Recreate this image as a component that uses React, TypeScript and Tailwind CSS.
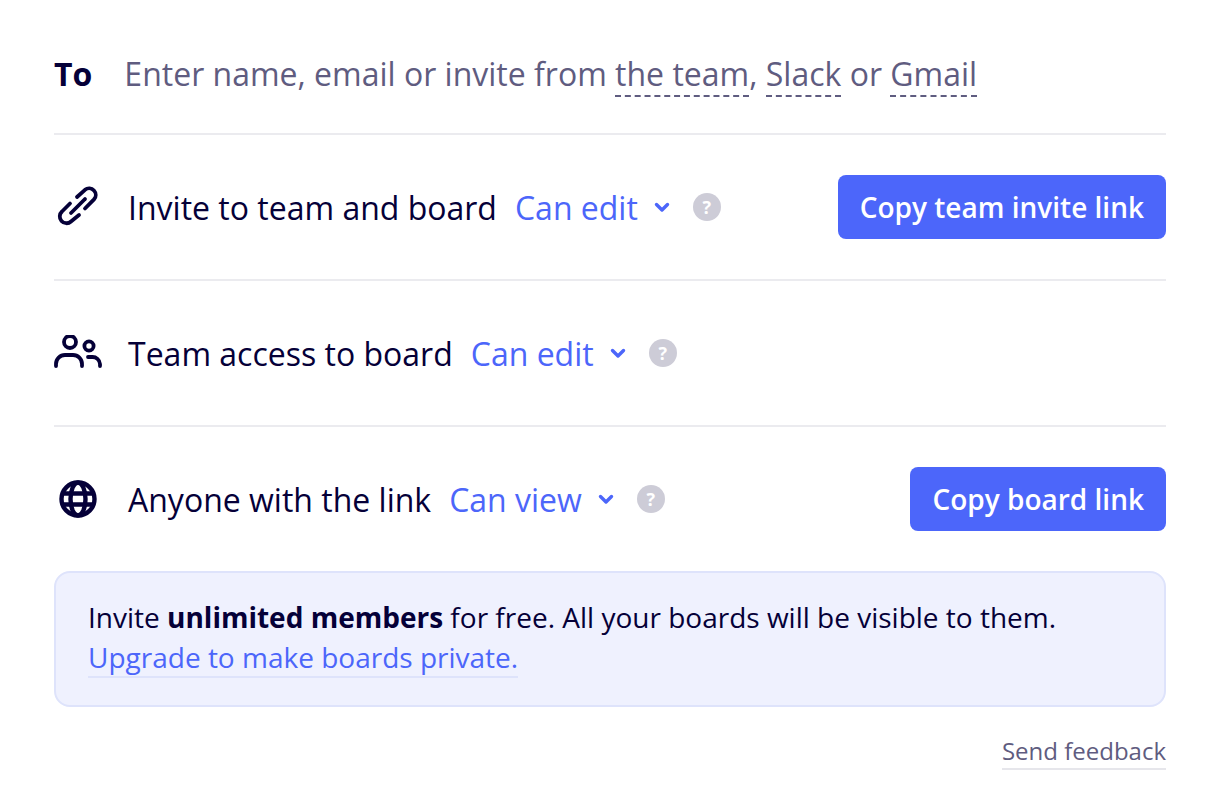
const font = { fontFamily: '"Open Sans", sans-serif' };

const LinkIcon = () => (
  <svg width="44" height="44" viewBox="6 1 44 44" fill="none" stroke="#050038" strokeWidth="3.8" strokeLinecap="round" strokeLinejoin="round">
    <path d="M27 13 L35 5.8 A 6.6 6.6 0 0 1 44 15.4 L35 24.5" />
    <path d="M29 31 L21 37.5 A 6.6 6.6 0 0 1 12 27.5 L20 19.5" />
    <path d="M35 15 L21 29" />
  </svg>
);

const TeamIcon = () => (
  <svg width="48" height="36" viewBox="4 6 48 36" fill="none" stroke="#050038" strokeWidth="3.8" strokeLinecap="round">
    <circle cx="20" cy="13" r="6" />
    <circle cx="39" cy="17" r="4.6" />
    <path d="M6 37 v-2 a9 9 0 0 1 9 -9 h8 a9 9 0 0 1 9 9 v2" />
    <path d="M38 28 h4 a7.5 7.5 0 0 1 8 7 v2" />
  </svg>
);

const GlobeIcon = () => (
  <svg width="38" height="38" viewBox="0 0 38 38" fill="none" stroke="#050038" strokeWidth="4.4">
    <circle cx="19" cy="19" r="16.5" />
    <ellipse cx="19" cy="19" rx="7.5" ry="16.5" />
    <path d="M3 13.5 H35 M3 24.5 H35" />
  </svg>
);

const Permission = ({ label }: { label: string }) => (
  <div className="flex items-center">
    <span className="pt-[2px] text-[#4c66fa]">{label}</span>
    <svg className="ml-[16px]" width="16" height="11" viewBox="0 0 16 11" fill="none" stroke="#4c66fa" strokeWidth="3.4" strokeLinecap="round" strokeLinejoin="round">
      <path d="M2.5 2.5 L8 8 L13.5 2.5" />
    </svg>
    <span className="ml-[23px] flex h-[28px] w-[28px] items-center justify-center rounded-full bg-[#cdccd7] text-[18px] font-bold text-white">?</span>
  </div>
);

const Row = ({ icon, label, permission, action, last }: { icon: React.ReactNode; label: string; permission: string; action?: string; last?: boolean }) => (
  <div className={last ? 'flex h-[146px] items-center justify-between pb-[2px]' : 'flex h-[146px] items-center justify-between border-b-2 border-[#ebebef]'}>
    <div className="flex items-center text-[32px] text-[#050038]">
      <div className="flex w-[48px] justify-center">{icon}</div>
      <span className="ml-[26px] mr-[18px] pt-[2px]">{label}</span>
      <Permission label={permission} />
    </div>
    {action && (
      <button className="h-[64px] rounded-[8px] bg-[#4c66fa] px-[22px] text-[28px] font-semibold text-white">{action}</button>
    )}
  </div>
);

const Dashed = ({ children }: { children: React.ReactNode }) => (
  <span className="inline-block border-b-2 border-dashed border-[#5f5c80] leading-[42px]">{children}</span>
);

export default function App() {
  return (
    <div className="h-[798px] w-[1220px] bg-white px-[54px]" style={font}>
      <div className="flex h-[135px] items-center border-b-2 border-[#ebebef] pt-[14px] text-[32px]">
        <span className="font-bold text-[#050038]">To</span>
        <div className="ml-[32px] text-[#5f5c80]">
          Enter name, email or invite from <Dashed>the team</Dashed>, <Dashed>Slack</Dashed> or <Dashed>Gmail</Dashed>
        </div>
      </div>

      <Row icon={<LinkIcon />} label="Invite to team and board" permission="Can edit" action="Copy team invite link" />
      <Row icon={<TeamIcon />} label="Team access to board" permission="Can edit" />
      <Row icon={<GlobeIcon />} label="Anyone with the link" permission="Can view" action="Copy board link" last />

      <div className="-mt-[2px] h-[136px] rounded-[16px] border-2 border-[#dee3fb] bg-[#eff1fe] px-[32px] pt-[24px] text-[28px] leading-[40px] text-[#050038]">
        <div>
          Invite <b className="font-bold">unlimited members</b> for free. All your boards will be visible to them.
        </div>
        <span className="inline-block border-b-2 border-[#dee3fb] leading-[38px] text-[#4c66fa]">Upgrade to make boards private.</span>
      </div>

      <div className="mt-[26px] flex justify-end">
        <span className="border-b-2 border-[#e6e6eb] text-[24px] leading-[35px] text-[#5f5c80]">Send feedback</span>
      </div>
    </div>
  );
}
